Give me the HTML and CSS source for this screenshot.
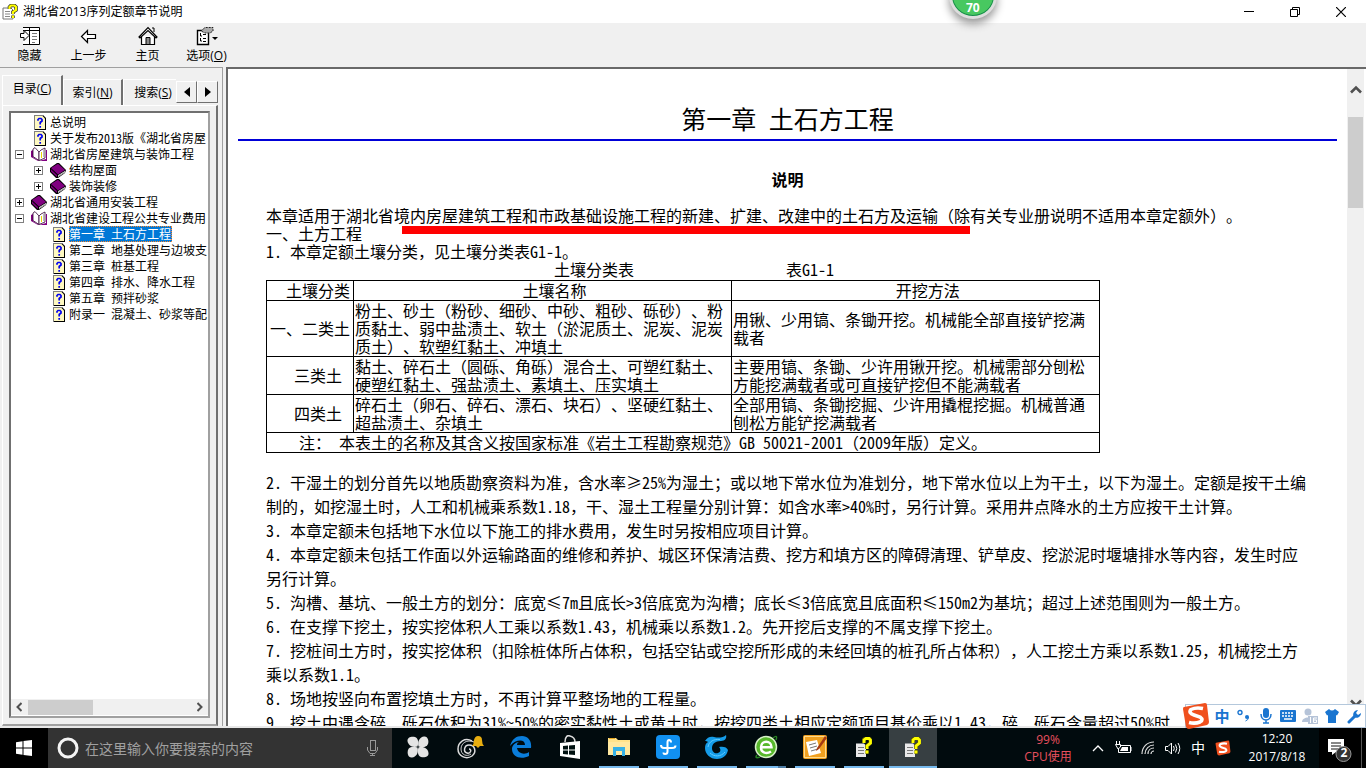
FILE: index.html
```html
<!DOCTYPE html>
<html lang="zh-CN">
<head>
<meta charset="utf-8">
<title>湖北省2013序列定额章节说明</title>
<link rel="stylesheet" href="styles.css">
</head>
<body>
<svg class="defs" aria-hidden="true">
  <symbol id="doc" viewBox="0 0 12 15"><path d="M0 0H9L12 3V15H0Z" fill="#000"/><path d="M1 1H8.500L11 3.500V14H1Z" fill="#fff9c0"/><path d="M.5 0V15M0 .5H9" stroke="#808080"/><path d="M4 5.800V4.500L5 3.500H7L8 4.500V6L6.200 7.500V9.500M6.200 11V12.800" fill="none" stroke="#0000f0" stroke-width="1.700"/></symbol>
  <symbol id="book" viewBox="0 0 16 15"><path d="M0 5L7 0L9 0L16 7L15 10L8 15L6 15L0 9Z" fill="#000"/><path d="M1 5L8 .8L15 7L8 11.500Z" fill="#800080"/><path d="M1 6.200L7 12V14L1 8.500Z" fill="#800080"/><path d="M8 12.200L15 8V9.500L8 14Z" fill="#fff"/><path d="M8 13.300L15 9" stroke="#808080" stroke-width=".8"/></symbol>
  <symbol id="open" viewBox="0 0 16 15"><path d="M0 4L2 3V10L8 14L15 12V3L16 3V14H7L0 10Z" fill="#800080"/><path d="M2 2L4 .6L8 5V13.500L2 9.500Z" fill="#fff" stroke="#300030" stroke-width=".8"/><path d="M8 13.500V5L10 3L14 1V11Z" fill="#fff" stroke="#300030" stroke-width=".8"/><path d="M10.500 5V11" stroke="#e8d800"/><path d="M12.500 3V10" stroke="#bbb"/></symbol>
  <symbol id="help" viewBox="0 0 16 20"><path d="M0 6.500H8L10 8.500V20H0Z" fill="#e9e9e9"/><path d="M2 10.500H8M2 13.500H8M2 16.500H8" stroke="#777"/><path d="M8 6V2.500L10 1H13L14.500 3V6L11 9V12M9.500 15H12.500" stroke="#4a4a00" stroke-width="4" fill="none"/><path d="M8 6V3L10 1.500H13L14.500 3V6L11 9V12M9.500 15H12.500" stroke="#ff0" stroke-width="2.800" fill="none"/></symbol>
  <symbol id="sogou" viewBox="0 0 28 28"><path d="M2 5L23 1Q25 1 25 3L27 20Q27 22 25 23L7 27Q5 27 4 25L1 7Q1 5 2 5Z" fill="#f0501e"/><path d="M21 6.500Q14 5 9 7.500Q6 11 12 13L18 15Q22 18 18 20Q13 22 7 20.500" fill="none" stroke="#fff" stroke-width="3.600"/></symbol>
</svg>
<div class="app">
  <header class="titlebar">
    <svg class="app-icon" viewBox="0 0 16 16"><path d="M1 4H9L11 6V15H1Z" fill="#fff" stroke="#777"/><path d="M3 7.500H8M3 10H8M3 12.500H8" stroke="#888"/><path d="M7.500 5V3L9 1.500H12.500L14 3V6L11 8V10M11 11.500V14" fill="none" stroke="#333" stroke-width="3.600"/><path d="M7.500 5V3L9 1.500H12.500L14 3V6L11 8V10M11 11.500V14" fill="none" stroke="#ff0" stroke-width="2.200"/></svg>
    <h1 class="app-title">湖北省2013序列定额章节说明</h1>
    <div class="window-buttons">
      <button aria-label="最小化"><svg width="10" height="10"><path d="M0 4.500H10" stroke="#000"/></svg></button>
      <button aria-label="还原"><svg width="10" height="10"><path d="M.5 2.500H7.500V9.500H.5ZM2.500 2V.5H9.500V7.500H8" fill="none" stroke="#000"/></svg></button>
      <button aria-label="关闭"><svg width="10" height="10"><path d="M0 0L10 10M10 0L0 10" stroke="#000" stroke-width="1.200"/></svg></button>
    </div>
  </header>
  <nav class="toolbar">
    <button><svg width="22" height="20" viewBox="0 0 22 20"><path d="M4 1.500H20.500V18.500H4" fill="#fff" stroke="#000"/><path d="M10.500 1V19M4 4.500H20" stroke="#000"/><path d="M13 7.500H18M13 10.500H18M13 13.500H18M13 16.500H16" stroke="#777"/><path d="M1.500 7.500H5V4.500L10 9.500L5 14.500V11.500H1.500Z" fill="#fff" stroke="#000"/></svg>隐藏</button>
    <button><svg width="18" height="20" viewBox="0 0 18 20"><path d="M1.500 10.500L7.500 4.500V8.500H15.500V12.500H7.500V16.500Z" fill="#fff" stroke="#000" stroke-width="1.200"/></svg>上一步</button>
    <button><svg width="20" height="20" viewBox="0 0 20 20"><path d="M3.500 10V18.500H16.500V10" fill="#fff" stroke="#000" stroke-width="1.200"/><path d="M14 2H16V6" fill="none" stroke="#000"/><path d="M1 11L10 1.500L19 11L18 12L10 4.500L2 12Z" fill="#fff" stroke="#000" stroke-width="1.200"/><path d="M8 18V11.500H12V18" fill="#888" stroke="#000"/></svg>主页</button>
    <button><svg width="22" height="20" viewBox="0 0 22 20"><path d="M1.500 4.500H12.500V18.500H1.500Z" fill="#fff" stroke="#000" stroke-width="1.400"/><path d="M4.500 7V10H6M4.500 12V15H6M7 8.500H10M7 12.500H10M7 15.500H10" fill="none" stroke="#000"/><path d="M5 5L9 1.500H17V5L14 7H9Z" fill="#aaa" stroke="#222" stroke-dasharray="2 1"/><path d="M16 11H22L19 14Z"/></svg><span>选项(<u>O</u>)</span></button>
  </nav>
  <main class="main">
    <aside class="sidebar">
      <div class="tabs">
        <button class="tab active">目录(<u>C</u>)</button>
        <button class="tab">索引(<u>N</u>)</button>
        <button class="tab last">搜索(<u>S</u>)</button>
        <button class="tab-arrow" aria-label="向左"><svg width="6" height="10"><path d="M6 0V10L0 5Z"/></svg></button>
        <button class="tab-arrow" aria-label="向右"><svg width="6" height="10"><path d="M0 0V10L6 5Z"/></svg></button>
      </div>
      <div class="tab-page">
        <div class="tree-box">
          <ul class="tree">
            <li><a href="#a"><i></i><svg class="doc"><use href="#doc"/></svg><span>总说明</span></a></li>
            <li><a href="#a"><i></i><svg class="doc"><use href="#doc"/></svg><span>关于发布2013版《湖北省房屋</span></a></li>
            <li><a href="#a"><i class="box"></i><svg class="book"><use href="#open"/></svg><span>湖北省房屋建筑与装饰工程</span></a>
              <ul>
                <li><a href="#a"><i class="box plus"></i><svg class="book"><use href="#book"/></svg><span>结构屋面</span></a></li>
                <li><a href="#a"><i class="box plus"></i><svg class="book"><use href="#book"/></svg><span>装饰装修</span></a></li>
              </ul>
            </li>
            <li><a href="#a"><i class="box plus"></i><svg class="book"><use href="#book"/></svg><span>湖北省通用安装工程</span></a></li>
            <li><a href="#a"><i class="box"></i><svg class="book"><use href="#open"/></svg><span>湖北省建设工程公共专业费用</span></a>
              <ul>
                <li><a href="#a"><i></i><svg class="doc"><use href="#doc"/></svg><span class="selected">第一章 土石方工程</span></a></li>
                <li><a href="#a"><i></i><svg class="doc"><use href="#doc"/></svg><span>第二章 地基处理与边坡支</span></a></li>
                <li><a href="#a"><i></i><svg class="doc"><use href="#doc"/></svg><span>第三章 桩基工程</span></a></li>
                <li><a href="#a"><i></i><svg class="doc"><use href="#doc"/></svg><span>第四章 排水、降水工程</span></a></li>
                <li><a href="#a"><i></i><svg class="doc"><use href="#doc"/></svg><span>第五章 预拌砂浆</span></a></li>
                <li><a href="#a"><i></i><svg class="doc"><use href="#doc"/></svg><span>附录一 混凝土、砂浆等配</span></a></li>
              </ul>
            </li>
          </ul>
          <div class="hscroll">
            <svg width="6" height="10"><path d="M5.500 1L1.500 5L5.500 9" fill="none" stroke="#505050" stroke-width="2"/></svg>
            <div class="htrack"><div class="hthumb"></div></div>
            <svg width="6" height="10"><path d="M.5 1L4.500 5L.5 9" fill="none" stroke="#505050" stroke-width="2"/></svg>
          </div>
        </div>
      </div>
    </aside>
    <section class="viewer">
      <article class="document">
        <h2 class="chapter">第一章 土石方工程</h2>
        <div class="body-text">
          <h3 class="section">说明</h3>
          <p class="marked">本章适用于湖北省境内房屋建筑工程和市政基础设施工程的新建、扩建、改建中的土石方及运输（除有关专业册说明不适用本章定额外）。</p>
          <p>一、土方工程</p>
          <p>1. 本章定额土壤分类，见土壤分类表G1-1。</p>
          <p class="caption"><span>土壤分类表</span><span>表G1-1</span></p>
          <table class="soil">
            <colgroup><col class="c1"><col class="c2"><col></colgroup>
            <thead><tr><th>土壤分类</th><th>土壤名称</th><th>开挖方法</th></tr></thead>
            <tbody>
              <tr><td class="wide">一、二类土</td><td>粉土、砂土（粉砂、细砂、中砂、粗砂、砾砂）、粉质黏土、弱中盐渍土、软土（淤泥质土、泥炭、泥炭质土）、软塑红黏土、冲填土</td><td>用锹、少用镐、条锄开挖。机械能全部直接铲挖满载者</td></tr>
              <tr><td>三类土</td><td>黏土、碎石土（圆砾、角砾）混合土、可塑红黏土、硬塑红黏土、强盐渍土、素填土、压实填土</td><td>主要用镐、条锄、少许用锹开挖。机械需部分刨松方能挖满载者或可直接铲挖但不能满载者</td></tr>
              <tr><td>四类土</td><td>碎石土（卵石、碎石、漂石、块石）、坚硬红黏土、超盐渍土、杂填土</td><td>全部用镐、条锄挖掘、少许用撬棍挖掘。机械普通刨松方能铲挖满载者</td></tr>
              <tr><td class="note" colspan="3">注： 本表土的名称及其含义按国家标准《岩土工程勘察规范》GB 50021-2001（2009年版）定义。</td></tr>
            </tbody>
          </table>
          <div class="clauses">
            <p>2. 干湿土的划分首先以地质勘察资料为准，含水率≥25%为湿土；或以地下常水位为准划分，地下常水位以上为干土，以下为湿土。定额是按干土编制的，如挖湿土时，人工和机械乘系数1.18，干、湿土工程量分别计算：如含水率&gt;40%时，另行计算。采用井点降水的土方应按干土计算。</p>
            <p>3. 本章定额未包括地下水位以下施工的排水费用，发生时另按相应项目计算。</p>
            <p>4. 本章定额未包括工作面以外运输路面的维修和养护、城区环保清洁费、挖方和填方区的障碍清理、铲草皮、挖淤泥时堰塘排水等内容，发生时应另行计算。</p>
            <p>5. 沟槽、基坑、一般土方的划分：底宽≤7m且底长&gt;3倍底宽为沟槽；底长≤3倍底宽且底面积≤150m2为基坑；超过上述范围则为一般土方。</p>
            <p>6. 在支撑下挖土，按实挖体积人工乘以系数1.43，机械乘以系数1.2。先开挖后支撑的不属支撑下挖土。</p>
            <p>7. 挖桩间土方时，按实挖体积（扣除桩体所占体积，包括空钻或空挖所形成的未经回填的桩孔所占体积），人工挖土方乘以系数1.25，机械挖土方乘以系数1.1。</p>
            <p>8. 场地按竖向布置挖填土方时，不再计算平整场地的工程量。</p>
            <p>9. 挖土中遇含碎、砾石体积为31%~50%的密实黏性土或黄土时，按挖四类土相应定额项目基价乘以1.43，碎、砾石含量超过50%时</p>
          </div>
        </div>
      </article>
      <div class="vscroll">
        <svg width="12" height="9"><path d="M1 7.500L6 2.500L11 7.500" fill="none" stroke="#505050" stroke-width="2.600"/></svg>
        <div class="vtrack"><div class="vthumb"></div></div>
        <svg width="12" height="9"><path d="M1 1.500L6 6.500L11 1.500" fill="none" stroke="#505050" stroke-width="2.600"/></svg>
      </div>
    </section>
  </main>
  <footer class="taskbar">
    <button class="start" aria-label="开始"><svg width="16" height="16"><path d="M0 2.200L6.500 1.300V7.500H0ZM7.500 1.100L16 0V7.500H7.500ZM0 8.500H6.500V14.700L0 13.800ZM7.500 8.500H16V16L7.500 14.900Z" fill="#fff"/></svg></button>
    <label class="search"><svg width="22" height="22"><circle cx="11" cy="11" r="9" fill="none" stroke="#f4f4f4" stroke-width="3"/></svg><input type="text" placeholder="在这里输入你要搜索的内容" aria-label="搜索"><svg width="11" height="16"><rect x="3.500" y=".5" width="5" height="10" fill="none" stroke="#999"/><path d="M.5 7V10L3 13.500H8L10.500 10V7M5.500 13V16M3 15.500H8" fill="none" stroke="#999"/></svg></label>
    <div class="tasks">
      <button class="pinned" aria-label="风扇"><svg width="22" height="22" viewBox="0 0 22 22"><g fill="#e4e4e4"><path d="M10.500 10.500C5 12 1 9 .5 5C0 1 5 0 8 1C11 2 12 6 10.500 10.500Z"/><path d="M11.500 10.500C10 5 13 1 17 .5C21 0 22 5 21 8C20 11 16 12 11.500 10.500Z"/><path d="M11.500 11.500C17 10 21 13 21.500 17C22 21 17 22 14 21C11 20 10 16 11.500 11.500Z"/><path d="M10.500 11.500C12 17 9 21 5 21.500C1 22 0 17 1 14C2 11 6 10 10.500 11.500Z"/></g></svg></button>
      <button class="pinned" aria-label="通知"><svg width="28" height="26" viewBox="0 0 28 26"><path d="M15 7C8 3 1 8 1 15C1 22 9 26 15 22C20 18 18 11 12 11C7 11 6 18 10 19C14 20 15 15 12 15" fill="none" stroke="#ddd" stroke-width="1.500"/><path d="M17 8C10 5 4 9 4 15C4 21 10 23 14 20" fill="none" stroke="#ccc"/><path d="M15 12Q17 10 17 6Q18 2 21 2Q25 2 25 6Q25 10 27 12ZM19 12H23L21 14Z" fill="#e8ae10"/></svg></button>
      <button aria-label="Edge"><svg width="22" height="22" viewBox="0 0 22 22"><path d="M0 10C2 3 6 0 12 0C18 0 22 5 21 12H7C8 18 15 19 19 16V20C11 24 2 21 2 13C2 9 6 6 9 6C7 7 7 8 7 9H15C15 3 6 3 0 10Z" fill="#0a7ddb"/></svg></button>
      <button aria-label="应用商店"><svg width="22" height="24" viewBox="0 0 22 24"><path d="M6 7C6 1 9 0 11 1C15 2 16 4 16 7" fill="none" stroke="#ddd" stroke-width="1.500"/><path d="M1 8L21 6V24L1 21Z" fill="#fff"/><path d="M4 11L9 10.500V14.500H4ZM10 10.400L16 10V14.500H10ZM4 15.500H9V19.500L4 19ZM10 15.500H16V20L10 19.600Z" fill="#011"/></svg></button>
      <button class="running" aria-label="文件资源管理器"><svg width="22" height="20" viewBox="0 0 22 20"><path d="M0 1H8L10 3H22V18H0Z" fill="#ffe28a"/><path d="M0 5H22V18H0Z" fill="#ffe8a0"/><path d="M1 1.500H7" stroke="#e8a820"/><path d="M5 10H17V19H14V14H8V19H5Z" fill="#35b0e6"/></svg></button>
      <button class="running" aria-label="便签"><svg width="24" height="24" viewBox="0 0 24 24"><rect width="24" height="24" rx="4" fill="#1190f0"/><path d="M15 7.500Q15 5 13 5Q11.500 5 11.500 7.500V16.500Q11.500 19 9 19Q7.500 19 7.500 17.500M5 10Q5 13 8 13H16Q19.500 13 19.500 10.500" fill="none" stroke="#fff" stroke-width="2"/></svg></button>
      <button class="running" aria-label="浏览器"><svg width="24" height="24" viewBox="0 0 24 24"><path d="M21 0C22 3 20 6 16 6C10 6 7 9 7 13C7 17 10 19 13 18C16 17 16 14 14 12C18 11 22 12 23 15C22 21 17 24 12 24C5 24 0 19 0 13C0 10 1 8 3 7C2 6 1 6 0 6C2 2 6 1 9 2C13 3 18 3 21 0Z" fill="#159ce8"/><path d="M3 12C4 6 9 4 15 4.500M5 18C9 22 16 22 20 17" stroke="#60cbff" fill="none"/></svg></button>
      <button class="running grouped" aria-label="360浏览器"><svg width="24" height="24" viewBox="0 0 24 24"><circle cx="12" cy="12" r="10.500" fill="#58b82c" stroke="#d7f0c8" stroke-width="1.500"/><path d="M7 12.300H17.500C17.500 5 7 5 7 12.300C7 18.500 13 19 17 16.500" fill="none" stroke="#fff" stroke-width="2.500"/><path d="M3 20Q0 24 6 22M19 3Q24 -1 22 5" stroke="#278322" stroke-width="1.500" fill="none"/></svg></button>
      <button class="running" aria-label="记事"><svg width="24" height="24" viewBox="0 0 24 24"><rect width="24" height="24" rx="2" fill="#f0a020"/><rect x="1.500" y="1.500" width="21" height="21" fill="none" stroke="#ffd98a"/><path d="M3 7L14 5L18 18L6 21Z" fill="#fff"/><path d="M6 10L13 8M7 13L14 11M8 16L15 14" stroke="#777"/><path d="M22 1L14 13L13 16L16 14L24 3Z" fill="#a63a12"/></svg></button>
      <button class="running" aria-label="帮助"><svg width="16" height="20"><use href="#help"/></svg></button>
      <button class="running current" aria-label="帮助"><svg width="16" height="20"><use href="#help"/></svg></button>
    </div>
    <div class="cpu">99%<br>CPU使用</div>
    <div class="tray">
      <button aria-label="显示隐藏的图标"><svg width="12" height="8"><path d="M1 7L6 2L11 7" fill="none" stroke="#fff" stroke-width="1.300"/></svg></button>
      <button aria-label="电源"><svg width="17" height="14"><path d="M5 4.500H15.500V11.500H3.500V8M16 6V10M1.500 0V3M4.500 0V3M.5 3.500H5.500V6L3 8Z" fill="none" stroke="#fff"/><path d="M7 6H13V10H5Z" fill="#fff"/></svg></button>
      <button aria-label="网络"><svg width="14" height="14"><path d="M1 13C1 6 6 1 13 1M4 13C4 8 8 4 13 4M7 13C7 10 9 7 13 7M10 13C10 12 11 10 13 10" fill="none" stroke="#ddd" stroke-width="1.200"/></svg></button>
      <button aria-label="音量"><svg width="16" height="13"><path d="M.5 4.500H3L6.500 1V12L3 8.500H.5ZM8.500 4Q10 6.500 8.500 9M10.500 2.500Q13 6.500 10.500 10.500M13 1Q16.500 6.500 13 12" fill="none" stroke="#fff"/></svg></button>
      <button class="ime-mode">中</button>
      <button aria-label="搜狗"><svg width="16" height="16"><use href="#sogou"/></svg></button>
    </div>
    <time class="clock">12:20<br>2017/8/18</time>
    <button class="notify" aria-label="通知"><svg width="24" height="25" viewBox="0 0 24 25"><path d="M0 1H16V14H8L4 17V14H0Z" fill="#fff"/><path d="M3 5H13M3 8H13M3 11H10" stroke="#111"/><circle cx="15.500" cy="16" r="7.500" fill="#333" stroke="#999"/></svg><b>2</b></button>
    <div class="peek"></div>
    <div class="ime">
      <svg class="ime-logo" width="28" height="28"><use href="#sogou"/></svg>
      <button class="zh">中</button>
      <button aria-label="标点"><svg width="14" height="14"><circle cx="3" cy="3.500" r="2" fill="none" stroke="#1a75d0" stroke-width="1.400"/><circle cx="10" cy="8" r="2" fill="#1a75d0"/><path d="M11.500 8Q11.500 11 8.500 12" stroke="#1a75d0" fill="none"/></svg></button>
      <button aria-label="语音"><svg width="12" height="16"><rect x="3" width="6" height="10" rx="3" fill="#1a75d0"/><path d="M1 6C1 14 11 14 11 6M6 12V15M3 15H9" fill="none" stroke="#1a75d0" stroke-width="1.500"/></svg></button>
      <button aria-label="键盘"><svg width="16" height="12"><rect width="16" height="12" rx="1" fill="#1a75d0"/><path d="M2 3H14M2 6H14" stroke="#fff" stroke-width="1.500" stroke-dasharray="2 1"/><path d="M4 9H12" stroke="#fff" stroke-width="1.500"/></svg></button>
      <button class="user" aria-label="用户"><svg width="16" height="16"><circle cx="6" cy="4" r="3.500" fill="#b5c3d8"/><path d="M0 14C0 8 12 8 12 14Z" fill="#b5c3d8"/><rect x="6" y="8" width="10" height="8" fill="#b5c3d8"/><path d="M8.500 9V15M15 10H11.500V14.500H14.500V12H11.500" stroke="#fff" fill="none"/></svg></button>
      <button aria-label="皮肤"><svg width="14" height="14"><path d="M4 0Q7 3 10 0L14 3L12 6.500L11 6V14H3V6L2 6.500L0 3Z" fill="#1a75d0"/></svg></button>
      <button aria-label="设置"><svg width="15" height="15"><path d="M2 13L8 7" stroke="#1a75d0" stroke-width="3" stroke-linecap="round"/><path d="M11 1C7 1 5 5 7 8C10 10 14 8 14 4L11 6L9 4Z" fill="#1a75d0"/></svg></button>
    </div>
  </footer>
  <div class="ball">70</div>
</div>
</body>
</html>
```
FILE: styles.css
```css
* { box-sizing: border-box; }
body { margin: 0; font: 12px/16px "Open Sans", "Noto Sans CJK SC", sans-serif; color: #000; }
button { border: 0; padding: 0; background: none; font: inherit; color: inherit; }
h1, h2, h3, p, ul { margin: 0; padding: 0; }
ul { list-style: none; }
a { color: inherit; text-decoration: none; }
.defs { display: none; }

.app { height: 100vh; display: flex; flex-direction: column; position: relative; overflow: hidden; background: #f0f0f0; }

.titlebar { flex: none; height: 23px; display: flex; align-items: center; background: #fff; padding: 0 2px; }
.app-icon { width: 16px; height: 16px; margin-right: 5px; }
.app-title { flex: 1; font-size: 12px; font-weight: 400; }
.window-buttons { display: flex; height: 22px; }
.window-buttons button { width: 46px; display: grid; place-items: center; }

.toolbar { flex: none; height: 44px; display: flex; }
.toolbar button { width: 59px; display: flex; flex-direction: column; align-items: center; padding-top: 3px; gap: 2px; }

.main { flex: 1; min-height: 0; display: flex; border-bottom: 2px solid #e8e8e8; }
.sidebar { flex: none; width: 223px; display: flex; flex-direction: column; padding-left: 2px; padding-right: 4px; border-top: 1px solid #a0a0a0; border-right: 1px solid #a0a0a0; }
.tabs { flex: none; height: 37px; display: flex; align-items: flex-end; padding-top: 7px; }
.tab { flex: none; width: 60px; height: 26px; border-top: 1px solid #fff; border-left: 1px solid #fff; border-right: 2px solid #707070; white-space: nowrap; overflow: hidden; }
.tab.active { width: 61px; height: 30px; padding-bottom: 4px; }
.tab.last { width: 53px; border-right: 0; padding-left: 6px; }
.tab-arrow { flex: 1; height: 22px; margin-bottom: 2px; display: grid; place-items: center; border: 1px solid #fff; border-right-color: #707070; border-bottom-color: #707070; }
.tab-page { flex: 1; min-height: 0; display: flex; padding: 5px 6px 6px; border-top: 1px solid #fff; border-left: 1px solid #fff; border-right: 2px solid #707070; border-bottom: 2px solid #a0a0a0; }
.tree-box { flex: 1; min-width: 0; display: flex; flex-direction: column; background: #fff; border: 2px solid #707070; border-right: 2px solid #a0a0a0; border-bottom: 2px solid #a0a0a0; padding: 1px 0; }
.tree { flex: 1; overflow: hidden; font-family: "Noto Sans Mono CJK SC", "Noto Sans CJK SC", monospace; text-spacing-trim: space-all; }
.tree ul { padding-left: 19px; }
.tree a { display: flex; align-items: center; height: 16px; white-space: nowrap; }
.tree i { flex: none; width: 9px; height: 9px; margin: 0 6px 0 4px; }
.tree .box { border: 1px solid #808080; background: linear-gradient(#000, #000) center / 5px 1px no-repeat; }
.tree .plus { background: linear-gradient(#000, #000) center / 5px 1px no-repeat, linear-gradient(#000, #000) center / 1px 5px no-repeat; }
.tree svg { flex: none; }
.tree .doc { width: 12px; height: 15px; margin: 0 4px; }
.tree .book { width: 16px; height: 15px; margin: 0 3px 0 1px; }
.tree span { padding: 0 1px 0 0; }
.tree .selected { color: #fff; background: #0078d7; outline: 1px dotted #ff8728; outline-offset: -1px; }
.hscroll { flex: none; height: 16px; display: flex; align-items: center; gap: 6px; padding: 0 5px; background: #f0f0f0; }
.htrack { flex: 1; height: 15px; }
.hthumb { width: 40%; height: 15px; background: #cdcdcd; }

.viewer { flex: 1; min-width: 0; display: flex; margin-left: 3px; padding-right: 2px; border-top: 2px solid #696969; border-left: 2px solid #696969; background: #fff; }
.document { flex: 1; min-width: 0; overflow: hidden; padding: 31px 10px 0 10px; font: 16px/18px "Noto Sans Mono CJK SC", "Noto Sans CJK SC", monospace; text-spacing-trim: space-all; }
.chapter { font-size: 25px; line-height: 36px; font-weight: 500; text-align: center; padding-bottom: 3px; border-bottom: 2px solid #0000d8; }
.body-text { padding: 29px 28px 0; }
.section { font-size: 16px; line-height: 18px; text-align: center; margin-bottom: 18px; }
.marked { position: relative; }
.marked::after { content: ""; position: absolute; z-index: 1; left: 13%; top: 20px; width: 568px; height: 8px; background: #f00; }
.caption { display: flex; gap: 152px; padding-left: 288px; }
.soil { width: 80%; table-layout: fixed; border-collapse: collapse; margin-top: 2px; }
.soil .c1 { width: 87px; }
.soil .c2 { width: 378px; }
.soil th, .soil td { border: 1px solid #000; padding: 0 0 1px 1px; font-weight: 400; text-align: left; }
.soil th { text-align: center; padding-left: 24px; }
.soil th:first-child, .soil td:first-child { text-align: center; padding-left: 16px; }
.soil td.wide:first-child { padding-left: 0; }
.soil td.note:first-child { text-align: left; padding-left: 32px; }
.clauses { line-height: 24px; padding-top: 17px; }

.vscroll { flex: none; width: 17px; display: flex; flex-direction: column; align-items: center; background: #f0f0f0; padding: 16px 0 18px; }
.vtrack { flex: 1; width: 15px; padding-top: 23px; }
.vthumb { height: 91px; background: #cdcdcd; }

.taskbar { flex: none; height: 40px; display: flex; position: relative; background: #010b0e; color: #fff; }
.start { width: 48px; background: #000; display: grid; place-items: center; }
.search { width: 344px; display: flex; align-items: center; gap: 6px; padding: 0 14px 0 9px; background: #333; }
.search input { flex: 1; min-width: 0; border: 0; padding: 0; background: none; font: 14px/20px "Noto Sans CJK SC", sans-serif; outline: none; }
.search input::placeholder { color: #a0a0a0; opacity: 1; }
.tasks { display: flex; gap: 9px; margin-left: 11px; flex: 1; }
.tasks button { width: 40px; display: grid; place-items: center; border-bottom: 2px solid transparent; }
.tasks .pinned { padding-right: 10px; }
.tasks .pinned + .pinned { padding-right: 2px; }
.tasks .running { border-color: #76b9ed; }
.tasks .grouped { border-image: linear-gradient(90deg, #76b9ed 78%, #4d7da5 78%) 1; border-width: 0 0 2px; }
.tasks .current { width: 48px; margin-left: -4px; background: #373f42; }
.cpu { width: 60px; padding-top: 3px; line-height: 17px; text-align: center; color: #e8505f; }
.tray { display: flex; gap: 1px; margin-left: 8px; }
.tray button { width: 24px; display: grid; place-items: center; }
.tray .ime-mode { font-size: 14px; }
.clock { width: 84px; padding: 2px 0 0 0; line-height: 18px; text-align: center; }
.notify { width: 42px; display: grid; place-items: center; position: relative; background: #000; }
.notify svg { margin-top: 5px; }
.notify b { position: absolute; left: 21px; top: 17px; width: 8px; }
.peek { width: 5px; border-left: 1px solid #555; background: #000; }

.ime { position: absolute; right: 0; bottom: 40px; height: 24px; display: flex; align-items: center; background: #fff; border: 1px solid #b4c8dc; color: #1a75d0; }
.ime button { width: 22px; display: grid; place-items: center; }
.ime .zh { font: 700 15px/20px "Noto Sans CJK SC", sans-serif; }
.ime-logo { margin: 0 1px 0 -4px; }

.ball { position: absolute; left: 71%; top: -27px; margin-left: -21px; width: 48px; height: 46px; border-radius: 50%; border: 3px solid #ddd; background: #48c860; box-shadow: inset 0 0 0 1px #178a4c, 0 5px 8px #999; color: #fff; font-weight: 700; line-height: 16px; text-align: center; padding-top: 24px; }
```
